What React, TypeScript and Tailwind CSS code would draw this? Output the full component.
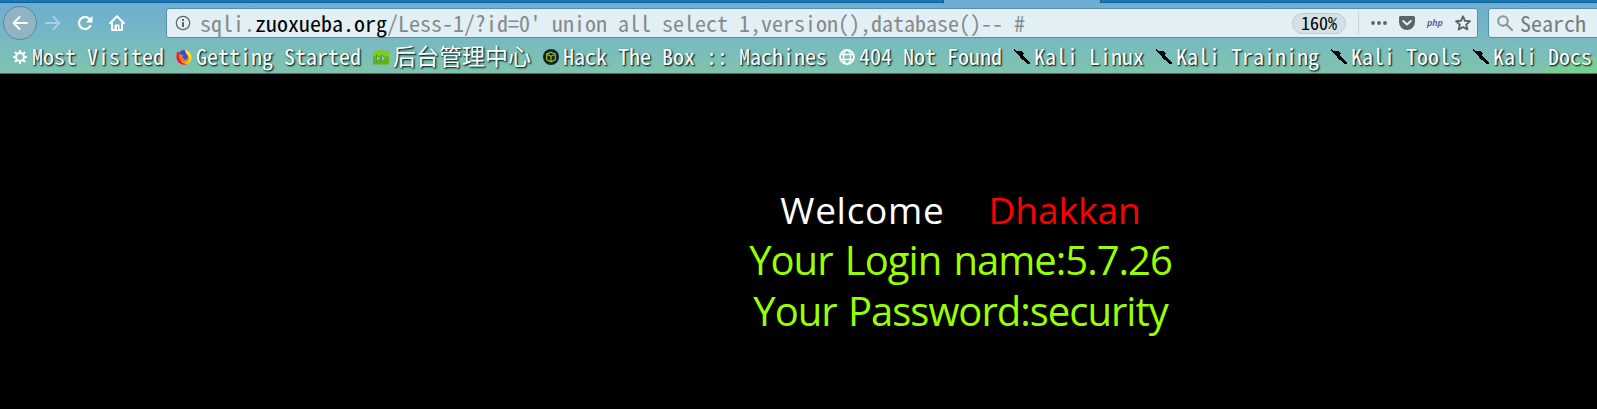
import type { ReactNode } from 'react';

const Gear = () => (
  <svg viewBox="0 0 16 16" className="size-4">
    <circle cx="8" cy="8" r="4" fill="none" stroke="#fff" strokeWidth="2.2" />
    <path d="M8 1v3M8 12v3M1 8h3M12 8h3M3 3l2 2M11 11l2 2M13 3l-2 2M5 11l-2 2" stroke="#fff" strokeWidth="2" />
  </svg>
);

const Firefox = () => (
  <svg viewBox="0 0 16 16" className="size-4">
    <circle cx="8" cy="8.4" r="7.2" fill="#ff9a00" />
    <path d="M8 .8c5 .3 8 4 7.4 8.4-.6 3.800-3.400 6-6.400 6.400 4-2 5-5 3.600-8.200C11.500 5 9 4 8 .8z" fill="#ffe21f" />
    <path d="M1.500 2.500C0 6 0 10 2 12.800c2 2.600 6 3.600 9 2.200-4 0-6-2-6.500-5L4 4z" fill="#f5123b" />
    <path d="M3 4.500C4 2 6.500 .8 9 1.200L10 4.500 12 7c0 3-2 4.700-4.500 4.500C5 11 3 9 3 4.500z" fill="#3050d8" />
    <path d="M2.500 5c2 0 3 1 5 1.500l-1.500 2 3 1.500c-2 2-5 1-6-1z" fill="#ff7a10" />
  </svg>
);

const GreenBag = () => (
  <svg viewBox="0 0 16 16" className="size-4">
    <path d="M5 4L6 1.500l4-1L11.500 4" fill="none" stroke="#8fc31f" strokeWidth="1.200" />
    <path d="M0 2.500h16V15.500H0z" fill="#62b510" />
    <path d="M0 2.500h16v5H0z" fill="#82cc12" />
    <path d="M3.500 6l4 3.500-4 3.500zM8.500 6l4.500 3.500-4.500 3.500z" fill="#8fc6c4" stroke="#3d8f2d" strokeWidth=".8" />
  </svg>
);

const HackBox = () => (
  <svg viewBox="0 0 16 16" className="size-4">
    <circle cx="8" cy="8" r="8" fill="#16202c" />
    <path d="M8 3.200l4.300 1.900v5.600L8 12.900l-4.300-2.200V5.100zM3.700 5.300L8 7.200l4.300-1.900M8 7.200v5.500" fill="none" stroke="#9dc80c" strokeWidth="1.200" />
  </svg>
);

const Globe = () => (
  <svg viewBox="0 0 16 16" className="size-4" fill="none" stroke="#fff" strokeWidth="1.300">
    <circle cx="8" cy="8" r="7" strokeWidth="1.800" />
    <ellipse cx="8" cy="8" rx="3.500" ry="7" />
    <path d="M1.500 5.500h13M1.500 10.500h13" />
  </svg>
);

const Kali = () => (
  <svg viewBox="0 0 16 16" className="size-4" shapeRendering="crispEdges">
    <path d="M0 0l3 2 1-.5 3 .5 3 3-1 .8 2 3 5 4.700V15l-2 .5L9 11 6 8.500 5 6 2.500 4.500 0 2z" fill="#000" />
  </svg>
);

const bookmarks: { icon: ReactNode; label: string; cjk?: boolean }[] = [
  { icon: <Gear />, label: 'Most Visited' },
  { icon: <Firefox />, label: 'Getting Started' },
  { icon: <GreenBag />, label: '后台管理中心', cjk: true },
  { icon: <HackBox />, label: 'Hack The Box :: Machines' },
  { icon: <Globe />, label: '404 Not Found' },
  { icon: <Kali />, label: 'Kali Linux' },
  { icon: <Kali />, label: 'Kali Training' },
  { icon: <Kali />, label: 'Kali Tools' },
  { icon: <Kali />, label: 'Kali Docs' },
];

const Toolbar = () => (
  <div className="flex h-10 items-center">
    <div className="ml-[3px] flex size-[34px] shrink-0 items-center justify-center rounded-full border border-[#5a87a3] bg-[#91b3c4]">
      <svg viewBox="0 0 16 16" className="size-4" fill="none" stroke="#fff" strokeWidth="2" strokeLinecap="round" strokeLinejoin="round">
        <path d="M15 8H1.500M7.500 2L1.500 8l6 6" />
      </svg>
    </div>
    <svg viewBox="0 0 16 16" className="ml-2 size-4 shrink-0" fill="none" stroke="#a9cedf" strokeWidth="2" strokeLinecap="round" strokeLinejoin="round">
      <path d="M1 8h13.500M8.500 2l6 6-6 6" />
    </svg>
    <svg viewBox="0 0 16 16" className="ml-4 size-4 shrink-0" fill="none" stroke="#fff" strokeWidth="2.200">
      <path d="M13.200 11A6 6 0 1 1 12.500 4" strokeLinecap="round" />
      <path d="M15.500 .8v6.700H8.800z" fill="#fff" stroke="none" />
    </svg>
    <svg viewBox="0 0 16 16" className="ml-4 size-4 shrink-0" fill="none" stroke="#fff" strokeWidth="2" strokeLinecap="round" strokeLinejoin="round">
      <path d="M1 8.300l7-7 7 7M3 8v7h10V8" />
      <path d="M6 15v-5h4v5" fill="#fff" strokeWidth="1" />
      <path d="M8.500 11.500v3" stroke="#75adc8" strokeWidth="1" />
    </svg>
    <div className="ml-[41px] flex h-[30px] w-[1312px] shrink-0 items-center rounded-[3px] border border-[#5590b0] bg-[#e2eff5]">
      <svg viewBox="0 0 16 16" className="ml-2 size-4 shrink-0" fill="none" stroke="#5d6468">
        <circle cx="8" cy="8" r="6.700" strokeWidth="1.200" />
        <path d="M8 7v5M8 4v2" strokeWidth="2" />
      </svg>
      <div className="ml-[9px] w-[1092px] shrink-0 pb-[3px] text-[22px] leading-7 whitespace-pre text-[#858a8c]">
        sqli.<span className="text-black">zuoxueba.org</span>/Less-1/?id=0' union all select 1,version(),database()-- #
      </div>
      <div className="flex h-[21px] w-[54px] shrink-0 items-center justify-center rounded-full border border-[#bccbd2] bg-[#d5e1e7] pb-[3px] text-[18px] leading-5 text-black">160%</div>
      <div className="ml-3 h-[22px] w-px shrink-0 bg-[#c9d3d8]" />
      <svg viewBox="0 0 16 16" className="ml-3 size-4 shrink-0" fill="#5c6469">
        <circle cx="2" cy="8" r="1.900" /><circle cx="8" cy="8" r="1.900" /><circle cx="14" cy="8" r="1.900" />
      </svg>
      <svg viewBox="0 0 16 16" className="ml-3 size-4 shrink-0">
        <path d="M1.500 1h13A1.500 1.500 0 0 1 16 2.500V7a8 8 0 0 1-16 0V2.500A1.500 1.500 0 0 1 1.500 1z" fill="#5c6469" />
        <path d="M4.200 6L8 9.500 11.800 6" fill="none" stroke="#e2eff5" strokeWidth="2" strokeLinecap="round" strokeLinejoin="round" />
      </svg>
      <span className="ml-3 w-4 shrink-0 font-['Open_Sans',sans-serif] text-[9px] leading-4 font-semibold text-[#3d4890] italic">php</span>
      <svg viewBox="0 0 16 16" className="ml-3 size-4 shrink-0" fill="none" stroke="#5c6469" strokeWidth="1.900" strokeLinejoin="round">
        <path d="M8 1.300l2 4.500 4.900.5-3.700 3.300 1.100 4.900L8 12l-4.300 2.500 1.100-4.900L1.100 6.300 6 5.800z" />
      </svg>
    </div>
    <div className="ml-[10px] flex h-[30px] w-[120px] shrink-0 items-center rounded-l-[3px] border border-[#5590b0] bg-[#e2eff5]">
      <svg viewBox="0 0 16 16" className="ml-2 size-4 shrink-0" fill="none" stroke="#8b9396" strokeWidth="2" strokeLinecap="round">
        <circle cx="6" cy="6" r="4.800" /><path d="M9.800 9.800L15 15" />
      </svg>
      <span className="ml-[7px] pb-[3px] text-[22px] leading-7 text-[#767d80]">Search</span>
    </div>
  </div>
);

const BookmarkBar = () => (
  <div className="flex h-7 items-center gap-3 pl-3">
    {bookmarks.map((b) => (
      <div key={b.label} className="flex h-7 shrink-0 items-center gap-1">
        {b.icon}
        <span className={b.cjk ? 'w-[138px] pb-[5px] text-[23px] leading-7 whitespace-pre text-white [text-shadow:1px_1px_2px_#0b2c2b,1px_1px_1px_#2b5a55]' : 'pb-[5px] text-[22px] leading-7 whitespace-pre text-white [text-shadow:1px_1px_2px_#0b2c2b,1px_1px_1px_#2b5a55]'}>
          {b.label}
        </span>
      </div>
    ))}
  </div>
);

export default function App() {
  return (
    <div className="h-[409px] w-[1597px] overflow-hidden bg-black font-['Noto_Sans_CJK_SC',sans-serif]">
      <header className="relative h-[74px] overflow-hidden border-b border-[#2f7866] bg-linear-to-b from-[#6dacd5] to-[#80c4ad] [font-feature-settings:'hwid']">
        <svg viewBox="0 0 52 15" className="absolute right-0 bottom-0 h-[15px] w-[52px]">
          <path d="M0 15v-5l4-1 5 1 6-1 2-2 4-1 1-3 6-1 3-2 5 1 4-1h12v15z" fill="#79cf91" />
        </svg>
        <div className="relative">
          <div className="flex h-[3px] justify-between">
            <div className="w-[944px] border-r border-b border-[#145d91] bg-[#1579b8]" />
            <div className="w-[497px] border-b border-l border-[#145d91] bg-[#1579b8]" />
          </div>
          <Toolbar />
          <BookmarkBar />
        </div>
      </header>
      <main className="ml-[745px] flex w-[431px] flex-col items-center pt-[110px] font-['Open_Sans','Noto_Sans',sans-serif] text-[40px] leading-[51px] whitespace-pre text-[#99ff00]">
        <div className="flex h-[50px] gap-[44px] text-[37px] text-white">
          <span className="tracking-[0.7px]">Welcome</span>
          <span className="text-[#ff0000]">Dhakkan</span>
        </div>
        <div className="tracking-[-1px] [word-spacing:3px]">Your Login name:5.7.26</div>
        <div className="tracking-[-1px] [word-spacing:2px]">Your Password:security</div>
      </main>
    </div>
  );
}
